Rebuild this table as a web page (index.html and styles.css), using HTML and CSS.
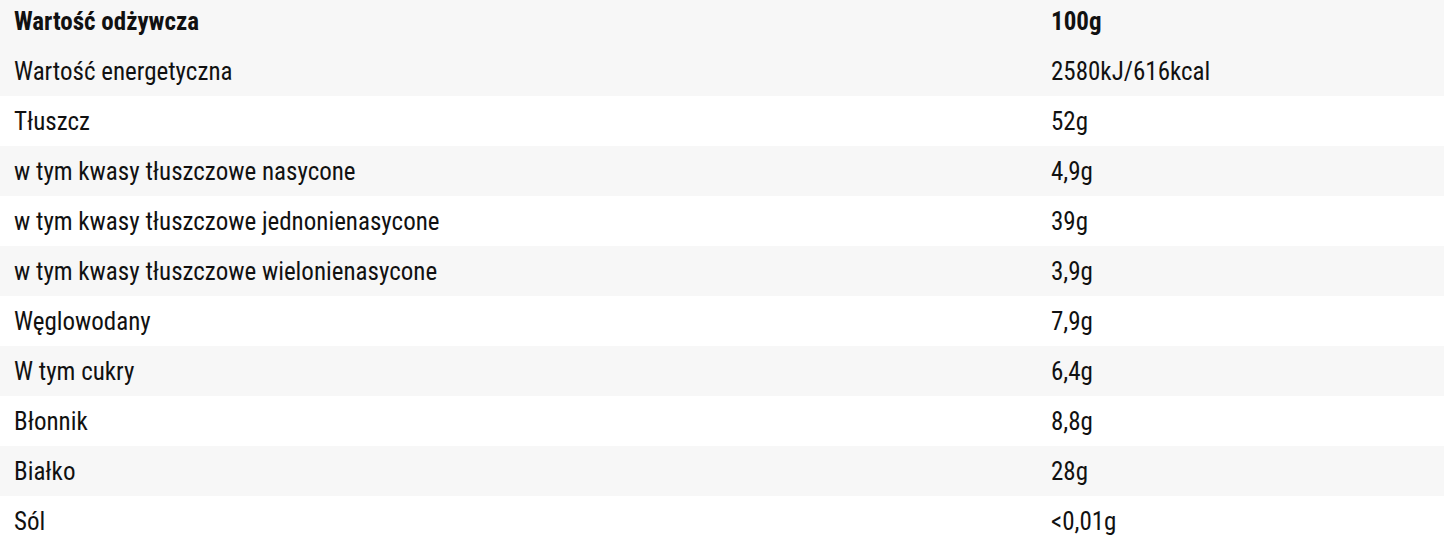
FILE: index.html
```html
<!DOCTYPE html>
<html lang="pl">
<head>
<meta charset="utf-8">
<title>Wartość odżywcza</title>
<link rel="stylesheet" href="styles.css">
</head>
<body>
<table class="nutrition">
  <thead>
    <tr><th class="name">Wartość odżywcza</th><th class="value">100g</th></tr>
  </thead>
  <tbody>
    <tr><td class="name">Wartość energetyczna</td><td class="value">2580kJ/616kcal</td></tr>
    <tr><td class="name">Tłuszcz</td><td class="value">52g</td></tr>
    <tr><td class="name">w tym kwasy tłuszczowe nasycone</td><td class="value">4,9g</td></tr>
    <tr><td class="name">w tym kwasy tłuszczowe jednonienasycone</td><td class="value">39g</td></tr>
    <tr><td class="name">w tym kwasy tłuszczowe wielonienasycone</td><td class="value">3,9g</td></tr>
    <tr><td class="name">Węglowodany</td><td class="value">7,9g</td></tr>
    <tr><td class="name">W tym cukry</td><td class="value">6,4g</td></tr>
    <tr><td class="name">Błonnik</td><td class="value">8,8g</td></tr>
    <tr><td class="name">Białko</td><td class="value">28g</td></tr>
    <tr><td class="name">Sól</td><td class="value">&lt;0,01g</td></tr>
  </tbody>
</table>
</body>
</html>
```
FILE: styles.css
```css
html, body {
  margin: 0;
  padding: 0;
  background: #ffffff;
}
body {
  font-family: Roboto, "Liberation Sans", sans-serif;
  color: #111111;
  font-size: 25px;
  font-stretch: 87.5%;
}
.nutrition {
  width: 1444px;
  border-collapse: collapse;
  table-layout: fixed;
}
.nutrition th,
.nutrition td {
  text-align: left;
  padding: 2px 14px 0;
  height: 50px;
  box-sizing: border-box;
  line-height: 28px;
  vertical-align: middle;
}
.nutrition th {
  font-weight: 700;
  height: 46px;
  padding: 0 14px 2px;
  background: #f7f7f7;
}
.nutrition .name {
  width: 1037px;
}
.nutrition tbody tr:nth-child(odd) td {
  background: #f7f7f7;
}
```
